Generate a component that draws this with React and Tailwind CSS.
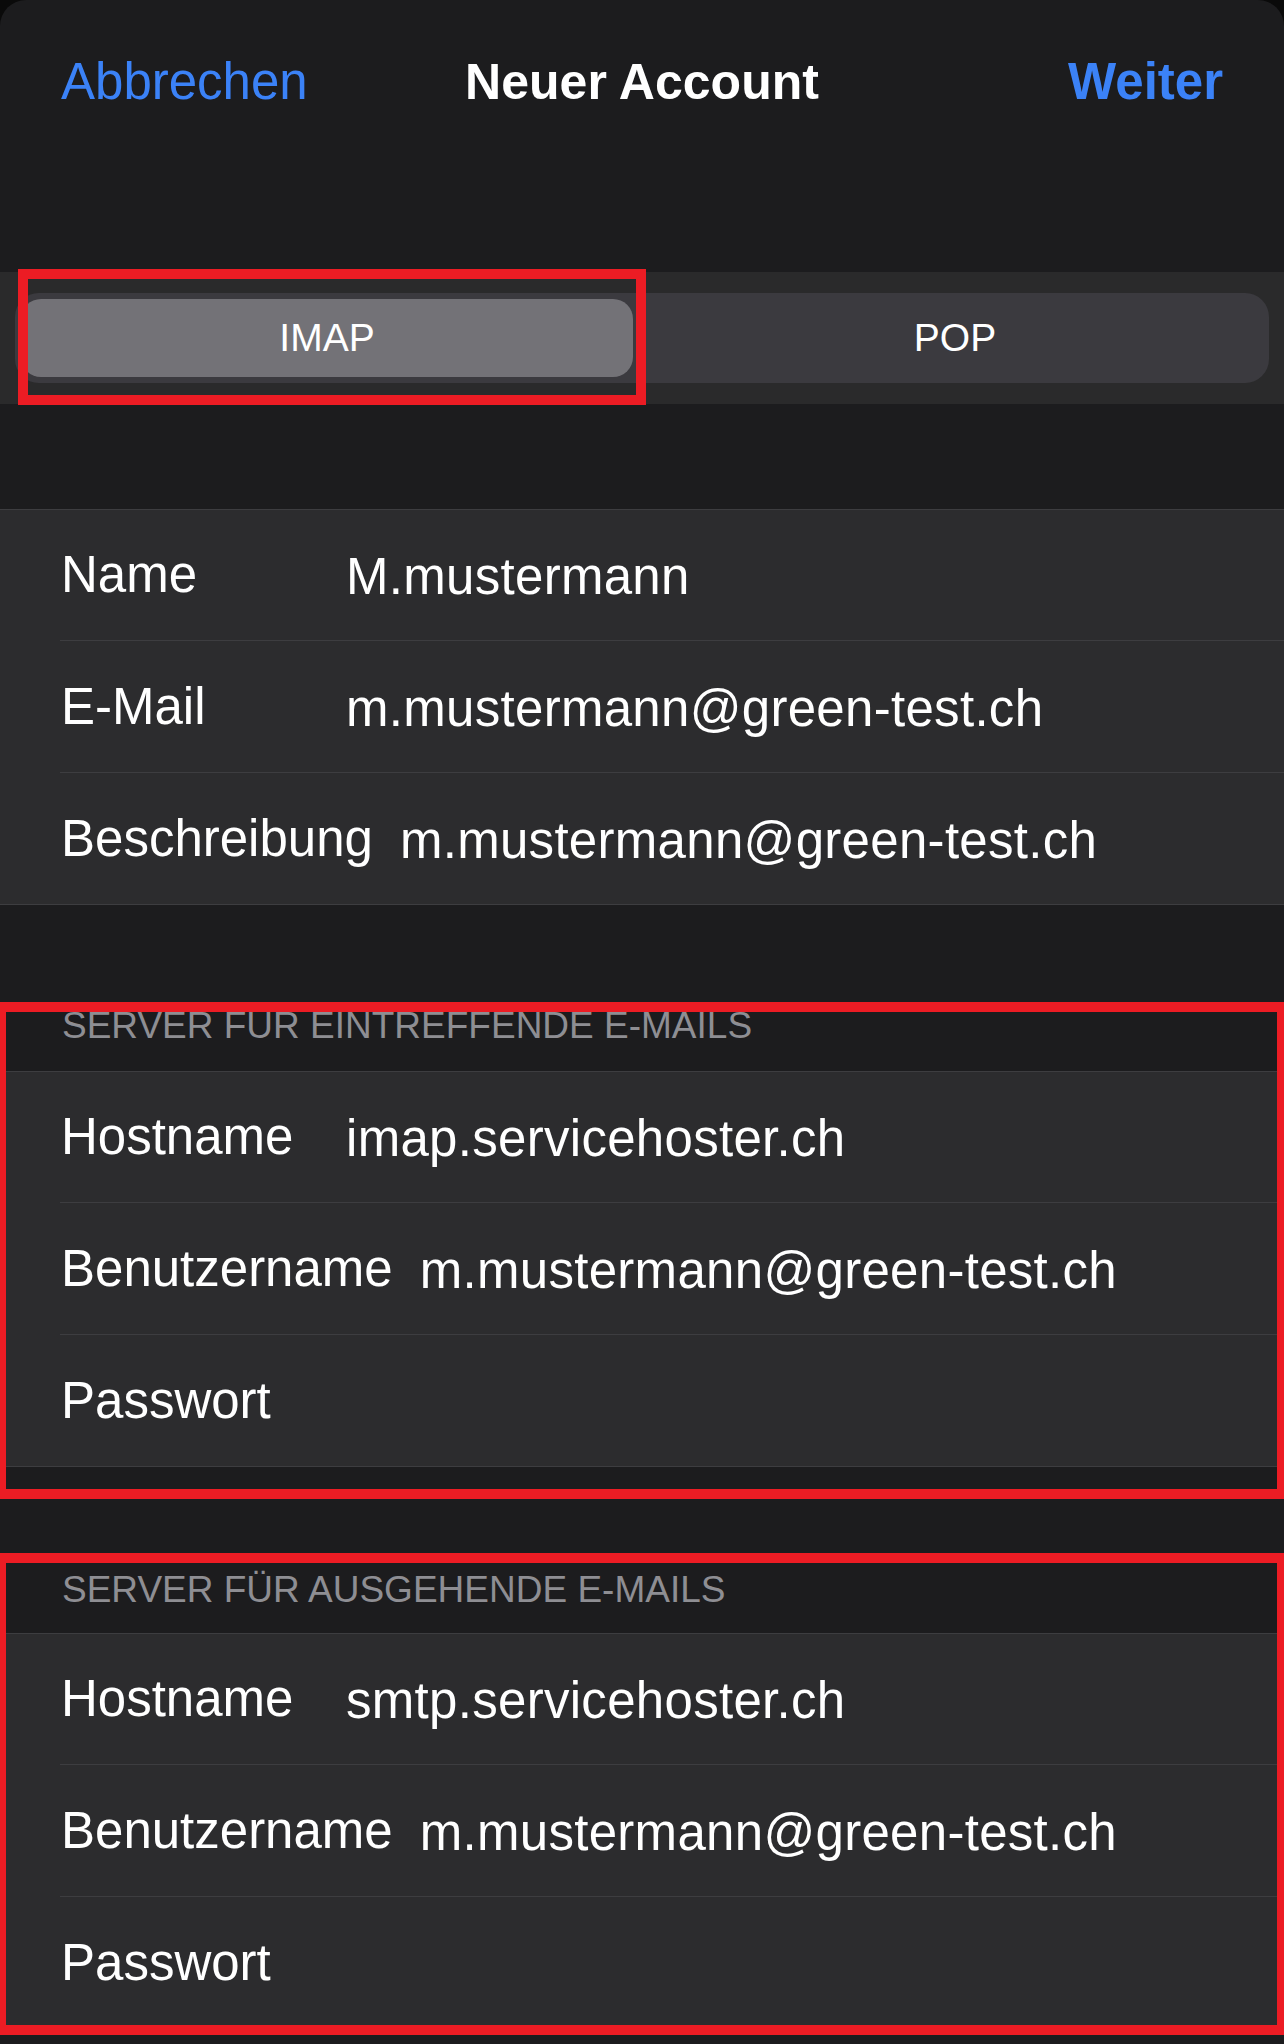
import React from "react";

const FONT = { fontFamily: '"Liberation Sans", Arial, sans-serif' };

function Row({ label, value, h = "h-[131px]" }) {
  return (
    <div className={`flex ${h} items-center pl-[61px] text-[51px] leading-[60px] text-white`}>
      <span className="min-w-[258px] shrink-0">{label}</span>
      {value ? <span className="ml-[27px] whitespace-nowrap pt-[4px] tracking-[0.3px]">{value}</span> : null}
    </div>
  );
}

function Sep() {
  return <div className="ml-[60px] h-px bg-[#3d3d40]" />;
}

function Group({ rows }) {
  return (
    <div className="border-y border-[#3d3d40] bg-[#2c2c2e]">
      <Row label={rows[0][0]} value={rows[0][1]} h="h-[130px]" />
      <Sep />
      <Row label={rows[1][0]} value={rows[1][1]} />
      <Sep />
      <Row label={rows[2][0]} value={rows[2][1]} />
    </div>
  );
}

function Header({ children, top = "pt-[101px]", bottom = "pb-[21px]" }) {
  return (
    <div className={`${top} ${bottom}`}>
      <div className="pl-[62px] text-[37px] leading-[44px] text-[#8e8e93] whitespace-nowrap">{children}</div>
    </div>
  );
}

export default function App() {
  return (
    <div className="bg-[#0a0a0a]" style={FONT}>
      <div className="relative min-h-[2044px] overflow-hidden rounded-t-[26px] bg-[#1c1c1e]">
        {/* Nav */}
        <div className="h-[272px] pt-[52px]">
          <div className="grid grid-cols-[1fr_auto_1fr] items-center px-[61px] text-[51px] leading-[60px]">
            <span className="text-[#3b82f7]">Abbrechen</span>
            <span className="text-[50px] font-bold text-white">Neuer Account</span>
            <span className="text-right font-bold text-[#3b82f7]">Weiter</span>
          </div>
        </div>

        {/* Segmented control */}
        <div className="h-[132px] bg-[#2a2a2b] px-[15px] py-[21px]">
          <div className="flex h-[90px] rounded-[24px] bg-[#3b3a3f] p-[6px] text-[39px] text-white">
            <div className="flex w-[612px] items-center justify-center rounded-[20px] bg-[#737277]">IMAP</div>
            <div className="flex flex-1 items-center justify-center pl-[14px]">POP</div>
          </div>
        </div>

        <div className="h-[105px]" />

        <Group
          rows={[
            ["Name", "M.mustermann"],
            ["E-Mail", "m.mustermann@green-test.ch"],
            ["Beschreibung", "m.mustermann@green-test.ch"],
          ]}
        />

        <Header top="pt-[99px]" bottom="pb-[23px]">SERVER FÜR EINTREFFENDE E-MAILS</Header>

        <Group
          rows={[
            ["Hostname", "imap.servicehoster.ch"],
            ["Benutzername", "m.mustermann@green-test.ch"],
            ["Passwort", ""],
          ]}
        />

        <Header>SERVER FÜR AUSGEHENDE E-MAILS</Header>

        <Group
          rows={[
            ["Hostname", "smtp.servicehoster.ch"],
            ["Benutzername", "m.mustermann@green-test.ch"],
            ["Passwort", ""],
          ]}
        />

        {/* Red annotation boxes */}
        <div className="pointer-events-none absolute left-[18px] top-[269px] h-[136px] w-[628px] border-[10px] border-[#ec1c24]" />
        <div className="pointer-events-none absolute left-0 top-[1002px] h-[497px] w-full border-t-[10px] border-b-[10px] border-l-[6px] border-r-[7px] border-[#ec1c24]" />
        <div className="pointer-events-none absolute left-0 top-[1553px] h-[482px] w-full border-t-[10px] border-b-[10px] border-l-[6px] border-r-[7px] border-[#ec1c24]" />
      </div>
    </div>
  );
}
